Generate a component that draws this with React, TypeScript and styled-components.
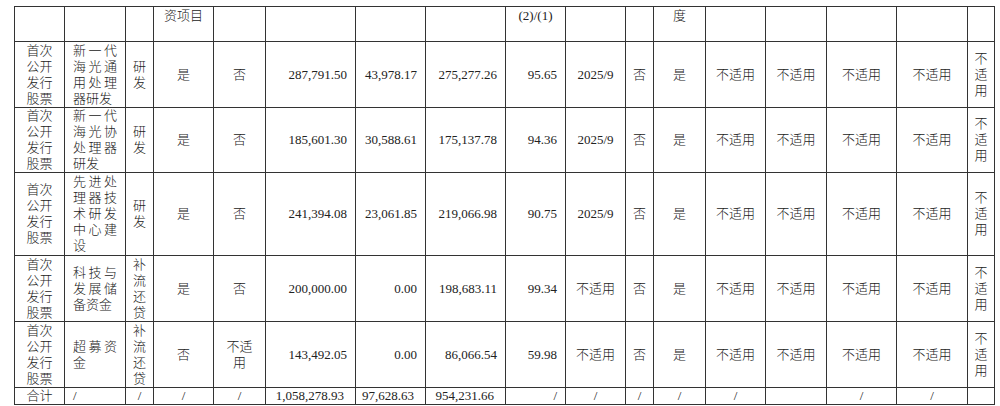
import React from "react";
import styled, { createGlobalStyle } from "styled-components";

const GlobalStyle = createGlobalStyle`
  html, body { margin: 0; padding: 0; background: #ffffff; }
`;

const Page = styled.div`
  padding: 6px 6px 4px 14px;
  background: #ffffff;
`;

const Table = styled.table`
  border-collapse: collapse;
  table-layout: fixed;
  width: 980px;
  font-family: "Liberation Serif", "Noto Sans CJK SC", serif;
  font-size: 13px;
  line-height: 16px;
  color: #222;
`;

const Col = styled.col<{ $w: number }>`
  width: ${(p) => p.$w}px;
`;

const Row = styled.tr<{ $h: number }>`
  height: ${(p) => p.$h}px;
`;

type Align = "left" | "center" | "right" | "justify";

const Cell = styled.td<{ $align: Align; $top?: boolean; $pl: number; $pr: number }>`
  border: 1px solid #333;
  padding: ${(p) => (p.$top ? "1px" : "0")} ${(p) => p.$pr}px 0 ${(p) => p.$pl}px;
  text-align: ${(p) => p.$align};
  vertical-align: ${(p) => (p.$top ? "top" : "middle")};
  word-break: break-all;
  font-weight: 300;
`;

const widths = [50, 61, 28, 60, 52, 90, 70, 80, 60, 60, 28, 52, 60, 61, 70, 71, 27];
const aligns: Align[] = [
  "center", "justify", "center", "center", "center", "right", "right", "right", "right",
  "center", "center", "center", "center", "center", "center", "center", "center",
];
const padL = [6, 8, 7, 7, 7, 6, 6, 6, 6, 4, 6, 6, 6, 6, 6, 6, 6];
const padR = [6, 8, 7, 7, 7, 8, 8, 8, 8, 4, 6, 6, 6, 6, 6, 6, 6];

const NA = "不适用";
const SRC = "首次公开发行股票";

const header = ["", "", "", "资项目", "", "", "", "", "(2)/(1)", "", "", "度", "", "", "", "", ""];

const rows: { h: number; cells: string[] }[] = [
  {
    h: 66,
    cells: [SRC, "新一代海光通用处理器研发", "研发", "是", "否", "287,791.50", "43,978.17", "275,277.26", "95.65", "2025/9", "否", "是", NA, NA, NA, NA, NA],
  },
  {
    h: 63,
    cells: [SRC, "新一代海光协处理器研发", "研发", "是", "否", "185,601.30", "30,588.61", "175,137.78", "94.36", "2025/9", "否", "是", NA, NA, NA, NA, NA],
  },
  {
    h: 83,
    cells: [SRC, "先进处理器技术研发中心建设", "研发", "是", "否", "241,394.08", "23,061.85", "219,066.98", "90.75", "2025/9", "否", "是", NA, NA, NA, NA, NA],
  },
  {
    h: 66,
    cells: [SRC, "科技与发展储备资金", "补流还贷", "是", "否", "200,000.00", "0.00", "198,683.11", "99.34", NA, "否", "是", NA, NA, NA, NA, NA],
  },
  {
    h: 66,
    cells: [SRC, "超募资金", "补流还贷", "否", NA, "143,492.05", "0.00", "86,066.54", "59.98", NA, "否", "是", NA, NA, NA, NA, NA],
  },
];

const total = ["合计", "/", "/", "/", "/", "1,058,278.93", "97,628.63", "954,231.66", "/", "/", "/", "/", "/", "", "/", "/", ""];

export default function App() {
  return (
    <>
      <GlobalStyle />
      <Page>
        <Table>
          <colgroup>
            {widths.map((w, i) => (
              <Col key={i} $w={w} />
            ))}
          </colgroup>
          <tbody>
            <Row $h={35}>
              {header.map((t, i) => (
                <Cell key={i} $align="center" $top $pl={2} $pr={2}>
                  {t}
                </Cell>
              ))}
            </Row>
            {rows.map((r, ri) => (
              <Row key={ri} $h={r.h}>
                {r.cells.map((t, i) => (
                  <Cell key={i} $align={aligns[i]} $pl={padL[i]} $pr={padR[i]}>
                    {t}
                  </Cell>
                ))}
              </Row>
            ))}
            <Row $h={17}>
              {total.map((t, i) => (
                <Cell
                  key={i}
                  $align={i === 1 ? "left" : aligns[i]}
                  $pl={padL[i]}
                  $pr={i >= 5 && i <= 7 ? 11 : padR[i]}
                >
                  {t}
                </Cell>
              ))}
            </Row>
          </tbody>
        </Table>
      </Page>
    </>
  );
}
